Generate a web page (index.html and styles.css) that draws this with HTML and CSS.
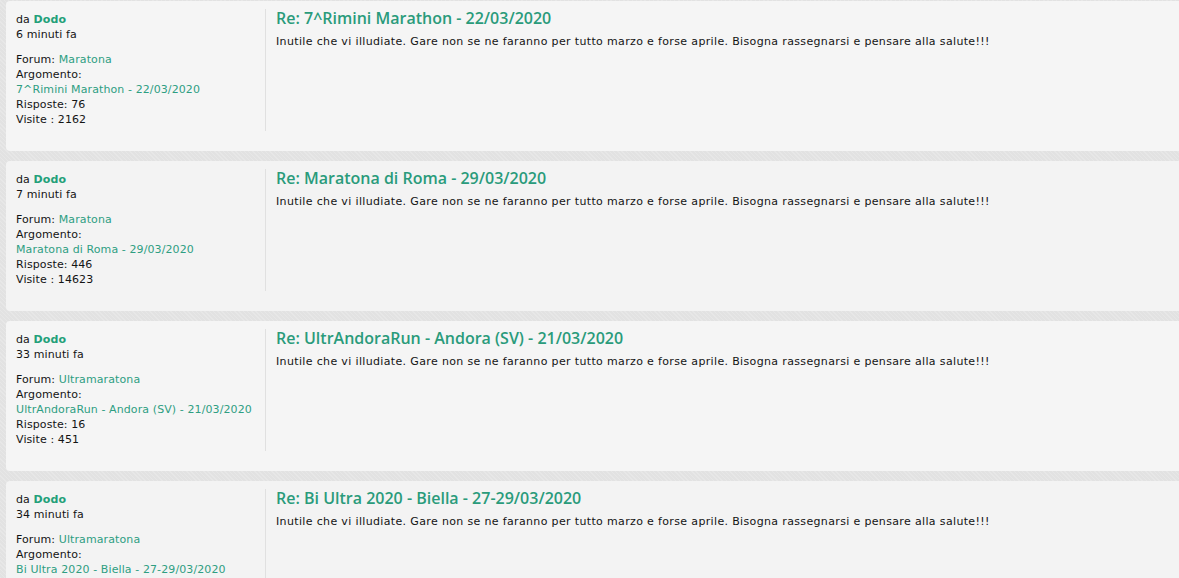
FILE: index.html
```html
<!DOCTYPE html>
<html lang="it">
<head>
<meta charset="utf-8">
<link rel="stylesheet" href="styles.css">
</head>
<body>
<div class="list">
  <div class="post">
    <div class="meta">
      <div>da <a class="author">Dodo</a></div>
      <div>6 minuti fa</div>
      <div class="info">
        <div>Forum: <a>Maratona</a></div>
        <div>Argomento:</div>
        <div><a>7^Rimini Marathon - 22/03/2020</a></div>
        <div>Risposte: 76</div>
        <div>Visite : 2162</div>
      </div>
    </div>
    <div class="body">
      <h3 class="title">Re: 7^Rimini Marathon - 22/03/2020</h3>
      <p class="text">Inutile che vi illudiate. Gare non se ne faranno per tutto marzo e forse aprile. Bisogna rassegnarsi e pensare alla salute!!!</p>
    </div>
  </div>
  <div class="post alt">
    <div class="meta">
      <div>da <a class="author">Dodo</a></div>
      <div>7 minuti fa</div>
      <div class="info">
        <div>Forum: <a>Maratona</a></div>
        <div>Argomento:</div>
        <div><a>Maratona di Roma - 29/03/2020</a></div>
        <div>Risposte: 446</div>
        <div>Visite : 14623</div>
      </div>
    </div>
    <div class="body">
      <h3 class="title">Re: Maratona di Roma - 29/03/2020</h3>
      <p class="text">Inutile che vi illudiate. Gare non se ne faranno per tutto marzo e forse aprile. Bisogna rassegnarsi e pensare alla salute!!!</p>
    </div>
  </div>
  <div class="post">
    <div class="meta">
      <div>da <a class="author">Dodo</a></div>
      <div>33 minuti fa</div>
      <div class="info">
        <div>Forum: <a>Ultramaratona</a></div>
        <div>Argomento:</div>
        <div><a>UltrAndoraRun - Andora (SV) - 21/03/2020</a></div>
        <div>Risposte: 16</div>
        <div>Visite : 451</div>
      </div>
    </div>
    <div class="body">
      <h3 class="title">Re: UltrAndoraRun - Andora (SV) - 21/03/2020</h3>
      <p class="text">Inutile che vi illudiate. Gare non se ne faranno per tutto marzo e forse aprile. Bisogna rassegnarsi e pensare alla salute!!!</p>
    </div>
  </div>
  <div class="post alt">
    <div class="meta">
      <div>da <a class="author">Dodo</a></div>
      <div>34 minuti fa</div>
      <div class="info">
        <div>Forum: <a>Ultramaratona</a></div>
        <div>Argomento:</div>
        <div><a>Bi Ultra 2020 - Biella - 27-29/03/2020</a></div>
        <div>Risposte: 3</div>
        <div>Visite : 120</div>
      </div>
    </div>
    <div class="body">
      <h3 class="title">Re: Bi Ultra 2020 - Biella - 27-29/03/2020</h3>
      <p class="text">Inutile che vi illudiate. Gare non se ne faranno per tutto marzo e forse aprile. Bisogna rassegnarsi e pensare alla salute!!!</p>
    </div>
  </div>
</div>
</body>
</html>
```
FILE: styles.css
```css
html, body {
  margin: 0;
  padding: 0;
  height: 100%;
  overflow: hidden;
}
body {
  background-color: #e2e2e2;
  background-image: repeating-linear-gradient(45deg, rgba(255,255,255,0.18) 0 1px, transparent 1px 3px);
  font-family: "DejaVu Sans", Verdana, sans-serif;
  font-size: 11px;
  color: #141414;
}
.list {
  display: flex;
  flex-direction: column;
  gap: 10px;
  padding: 1px 0 0 6px;
}
.post {
  display: flex;
  height: 150px;
  background: #f5f5f5;
  border-radius: 4px 0 0 4px;
  padding: 8px 0 0 10px;
  box-sizing: border-box;
  flex-shrink: 0;
}
.post.alt {
  background: #f3f3f3;
}
.meta {
  width: 250px;
  height: 122px;
  border-right: 1px solid #e0e0e0;
  line-height: 15px;
  box-sizing: border-box;
  padding-top: 3px;
  letter-spacing: 0.1px;
}
.info {
  margin-top: 10px;
}
a {
  color: #2e9e82;
  text-decoration: none;
}
.author {
  font-weight: bold;
  color: #23a079;
}
.body {
  padding-left: 10px;
}
.title {
  margin: -1px 0 0;
  font-family: "Open Sans", sans-serif;
  font-size: 16px;
  font-weight: 600;
  color: #2a9b7b;
  line-height: 20px;
}
.text {
  margin: 6px 0 0;
  line-height: 16px;
  letter-spacing: 0.35px;
}
```
